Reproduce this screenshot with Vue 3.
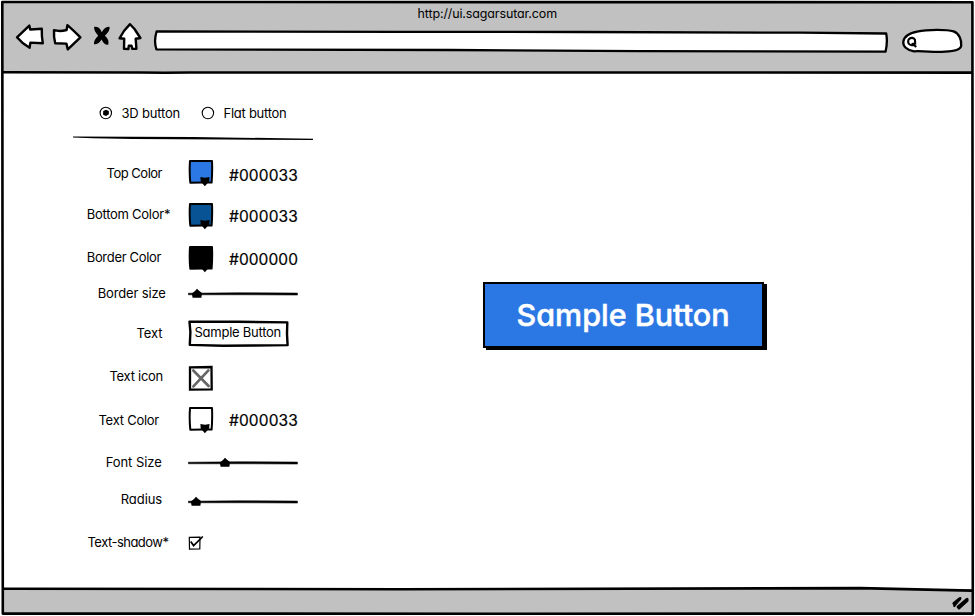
<script setup>
import { reactive } from 'vue'

/* Spreads the glyphs of an element so that it fills the given width. */
const vFit = {
  mounted(el, { value }) {
    const natural = el.getBoundingClientRect().width
    const gap = (value - natural) / el.textContent.trim().length
    el.style.letterSpacing = gap.toFixed(3) + 'px'
  },
}

const rows = reactive([
  { label: 'Top Color', x: 32.5, w: 55.5, h: 41, kind: 'color', fill: '#2b78e4', hex: '#000033', top: 1, hexTop: 7 },
  { label: 'Bottom Color*', x: 12.7, w: 83.5, h: 43, kind: 'color', fill: '#085394', hex: '#000033', top: 3, hexTop: 7 },
  { label: 'Border Color', x: 12.7, w: 74.5, h: 36, kind: 'color', fill: '#000000', hex: '#000000', top: 3, hexTop: 7 },
  { label: 'Border size', x: 23.7, w: 68, h: 40, kind: 'slider', at: 9, top: 9 },
  { label: 'Text', x: 62.5, w: 26, h: 43, kind: 'input', value: 'Sample Button', top: 1 },
  { label: 'Text icon', x: 35.5, w: 53.5, h: 44, kind: 'icon', top: 3 },
  { label: 'Text Color', x: 24.5, w: 60.5, h: 42, kind: 'color', fill: '#ffffff', hex: '#000033', top: 1, hexTop: 5 },
  { label: 'Font Size', x: 31.7, w: 56, h: 37, kind: 'slider', at: 37, top: 9 },
  { label: 'Radius', x: 46.7, w: 41.5, h: 43, kind: 'slider', at: 8, top: 11 },
  { label: 'Text-shadow*', x: 13.5, w: 81, h: 30, kind: 'check', top: 7 },
])
</script>

<template>
  <div class="window">
    <header class="chrome">
      <div class="title"><span v-fit="139.5">http://ui.sagarsutar.com</span></div>
      <div class="toolbar">
        <svg class="nav" width="136" height="32" viewBox="10 21 136 32">
          <g fill="#fff" stroke="#000" stroke-width="2.4" stroke-linejoin="round">
            <path d="M17 37.3 29.3 25.6 30.2 29.5 41.8 28.8Q41.5 36 42.8 43.3L30.4 42.6 29.6 47.8Q22 43.5 17 37.3Z" />
            <path d="M54 30.2Q60 31.8 66.6 30L67.4 25.2Q74 31 80.4 37.3L67.8 49.4 66.4 43.6 55.2 43.3Q53.6 37 54 30.2Z" />
            <path d="M130 24.2 134.5 29 140.4 38 135.7 38.8 136.4 48.7 132.4 48.9 131.5 45.7 128.8 45.6 128.4 49 124 48.8 124.2 38.7 119.6 38.3Q123.5 30.5 130 24.2Z" />
          </g>
          <path d="M94.2 26.8Q99.2 26 101.8 32.2 104.6 26.8 109.5 26.8 110.5 30.5 104.9 35.8 109.5 39.5 108.3 44.8 104.2 45.4 101.6 39.6 98.2 45 94 44.2 93.2 40.5 98.2 35.7 93.5 30.5 94.2 26.8Z" />
        </svg>
        <svg class="address" width="738" height="26" viewBox="152 28 738 26">
          <path d="M156.6 31.5 400 31.8 580 32 800 32.7 886.2 33.5Q887.8 42 885.6 51.6L640 51.1 450 50 156.4 49.4Q153.6 41 156.6 31.5Z" fill="#fff" stroke="#000" stroke-width="2.3" stroke-linejoin="round" />
        </svg>
        <svg class="search" width="64" height="28" viewBox="901 27 64 28">
          <path d="M917 31.6C928 29.3 947 29.4 953.5 31.4 959 33 961.8 39.8 961.2 45.6 960.8 50 954 51.2 945 51.6 935 52.8 926 50.7 914 51.3 899.2 49 899.2 35.2 917 31.6Z" fill="#fff" stroke="#000" stroke-width="2.3" />
          <path d="M914.6 44A3.7 3.7 0 1 1 914.9 39.5L915.2 43.6 911.6 44.1M913.3 44.2 916.2 47" fill="none" stroke="#000" stroke-width="2.1" />
        </svg>
      </div>
    </header>

    <main class="page">
      <form class="settings" @submit.prevent>
        <div class="modes">
          <svg width="14" height="14" viewBox="0 0 14 14">
            <circle cx="6.8" cy="7" r="5.7" fill="#fff" stroke="#000" stroke-width="1.1" />
            <path d="M4.2 5 7 3.8 9.8 5.1 9.9 8.3 7 10 4.1 8.8Z" />
          </svg>
          <span class="mode first"><span v-fit="58.5">3D button</span></span>
          <svg width="14" height="14" viewBox="0 0 14 14">
            <circle cx="6.9" cy="7" r="5.7" fill="#fff" stroke="#000" stroke-width="1.1" />
          </svg>
          <span class="mode"><span v-fit="63">Flat button</span></span>
        </div>
        <svg class="rule" width="242" height="6" viewBox="0 0 242 6">
          <path d="M0 1.6 120 1.9 240 3.8V5.1L150 4.5 60 4 20 3.3 0 2.4Z" />
        </svg>

        <div class="rows">
          <div v-for="row in rows" :key="row.label" class="row" :style="{ '--h': row.h + 'px', '--x': row.x + 'px', '--top': row.top + 'px' }">
            <div class="label"><span v-fit="row.w">{{ row.label }}</span></div>
            <div class="control">
              <template v-if="row.kind === 'color'">
                <svg width="26" height="28" viewBox="0 0 26 28">
                  <path d="M2 1.1 24 1Q24.5 12 23.6 22.6L15 22.5 2.3 22.7Q1.2 12 2 1.1Z" :fill="row.fill" stroke="#000" stroke-width="2" stroke-linejoin="round" />
                  <path d="M12.4 17.1 17 17.7 21.5 16.9 21.2 21.2 16.9 26.2 12.7 21.6Z" />
                </svg>
                <div class="hex" :style="{ '--hex-top': row.hexTop + 'px' }"><span v-fit="69">{{ row.hex }}</span></div>
              </template>

              <svg v-else-if="row.kind === 'slider'" width="112" height="12" viewBox="0 0 112 12">
                <path d="M.2 5.2 50 4.7 109.4 5 109.5 7.1 55 6.8.4 6.8Z" stroke="#000" stroke-width=".5" />
                <path :transform="`translate(${row.at} 0)`" d="M0 .8 1.8 2.5 5 5 4.4 9.7-4.4 9.8-5.2 5.5-2 3Z" />
              </svg>

              <div v-else-if="row.kind === 'input'" class="field">
                <svg class="outline" width="102" height="28" viewBox="0 0 102 28">
                  <path d="M1.5 1.8 50 1.8 99.3 2.4 99 14 99.6 25.1 65 25.5 35 25.7 1.8 24.9 2.4 12Z" fill="#fff" stroke="#000" stroke-width="2.4" stroke-linejoin="round" />
                </svg>
                <span v-fit="86.5">{{ row.value }}</span>
              </div>

              <svg v-else-if="row.kind === 'icon'" width="26" height="27" viewBox="0 0 26 27">
                <path d="M2 2.3 23.5 2 23.7 24.4 2 24.6Z" fill="#fff" stroke="#000" stroke-width="2.3" />
                <path d="M5.3 5.5 20.6 21M20.4 5.4 5.4 21.4" stroke="#666" stroke-width="2.7" stroke-linecap="round" />
              </svg>

              <svg v-else width="18" height="16" viewBox="0 0 18 16">
                <path d="M1.3 2.3 12 2.2 11.8 14 1.5 14.1Z" fill="#fff" stroke="#000" stroke-width="1.2" />
                <path d="M2.7 6.4 5.6 10.6 14.8 1.5" fill="none" stroke="#000" stroke-width="1.7" />
              </svg>
            </div>
          </div>
        </div>
      </form>

      <section class="preview">
        <button class="sample" type="button">
          <span v-fit="213">Sample Button</span>
        </button>
      </section>
    </main>

    <footer class="status">
      <svg width="20" height="18" viewBox="0 0 20 18">
        <path d="M3 9.5 8.5 5M7.2 13 16 5.4" stroke="#000" stroke-width="3.2" stroke-linecap="round" />
        <path d="M3.2 12 9.4 4.2M8 14.5 16.5 6.7" stroke="#000" stroke-width="2.2" stroke-linecap="round" />
      </svg>
    </footer>

    <svg class="frame" width="975" height="616" viewBox="0 0 975 616">
      <g fill="none" stroke="#000" stroke-width="2.6" stroke-linejoin="round">
        <path d="M2.3 2 972.4 2.2 972.8 613.6 500 613.7 2.8 613.6Z" />
        <path d="M2.5 72.2 140 72.5 165 72.8 190 72.5 530 72.5 972 72.6" />
        <path d="M3 588.7 400 589.2 860 588.1 972 590.6" />
      </g>
    </svg>
  </div>
</template>

<style>
body {
  margin: 0;
  background: #fff;
}
</style>

<style scoped>
.window {
  position: relative;
  display: flex;
  flex-direction: column;
  box-sizing: border-box;
  width: 975px;
  height: 616px;
  padding: 1px 2px 2px;
  overflow: hidden;
  background: #fff;
  color: #000;
  font-family: Inter, "Open Sans", sans-serif;
  font-feature-settings: "cv11", "ss03";
  font-size: 13px;
  line-height: 16px;
  white-space: nowrap;
}
svg {
  display: block;
  flex: none;
}
span {
  display: inline-block;
}
.frame {
  position: absolute;
  inset: 0;
  pointer-events: none;
}
.chrome {
  flex: none;
  height: 71px;
  background: #c1c1c1;
}
.title {
  height: 20px;
  padding: 5px 0 0 415.5px;
  box-sizing: border-box;
  font-size: 12.5px;
}
.toolbar {
  display: flex;
  align-items: flex-start;
  padding-left: 8px;
}
.address {
  margin: 7px 0 0 6px;
}
.search {
  margin: 6px 0 0 11px;
}
.page {
  flex: 1;
  display: flex;
  min-height: 0;
}
.settings {
  width: 330px;
  padding: 34px 0 0 71px;
  box-sizing: border-box;
}
.modes {
  display: flex;
  align-items: center;
  height: 14px;
  padding-left: 26px;
}
.mode {
  padding-left: 8.5px;
}
.mode.first {
  width: 79.5px;
}
.rule {
  margin-top: 15px;
}
.rows {
  padding: 18px 0 0 1px;
}
.row {
  display: flex;
  height: var(--h);
}
.label {
  width: 114px;
  padding: 6px 0 0 var(--x);
  box-sizing: border-box;
}
.control {
  display: flex;
  align-items: flex-start;
}
.control > * {
  margin-top: var(--top);
}
.control > .hex {
  margin: var(--hex-top) 0 0 15px;
  font-size: 15.5px;
  line-height: 19px;
  -webkit-text-stroke: 0.2px #000;
}
.field {
  position: relative;
  padding: 4px 0 0 6.5px;
}
.field span {
  position: relative;
}
.outline {
  position: absolute;
  left: 0;
  top: 0;
}
.preview {
  padding: 210px 0 0 151px;
}
.sample {
  width: 281px;
  height: 66px;
  padding: 0 0 0 31.5px;
  box-sizing: border-box;
  border: 2px solid #000;
  background: #2b78e4;
  box-shadow: 3px 2px 0 #000;
  color: #fff;
  font: 500 30.5px/62px Inter, "Open Sans", sans-serif;
  font-feature-settings: "cv11";
  -webkit-text-stroke: 0.5px #fff;
  text-align: left;
}
.status {
  flex: none;
  display: flex;
  justify-content: flex-end;
  height: 25px;
  padding: 5px 2px 0 0;
  box-sizing: border-box;
  background: #c1c1c1;
}
</style>
